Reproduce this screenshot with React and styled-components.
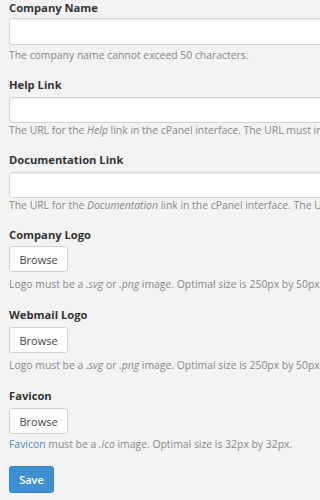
import React from 'react';
import styled, { createGlobalStyle } from 'styled-components';

const GlobalStyle = createGlobalStyle`
    html, body {
        margin: 0;
        padding: 0;
        background: #f3f3f3;
        overflow: hidden;
    }
    body {
        font-family: "Open Sans", "Liberation Sans", sans-serif;
        color: #333;
    }
`;

const Page = styled.div`
    width: 700px;
    padding: 0 9px;
`;

const FormGroup = styled.div`
    margin-bottom: ${props => props.file ? 15 : 14}px;
`;

const Label = styled.label`
    display: block;
    font-size: 11.2px;
    font-weight: 700;
    line-height: 15px;
    margin-bottom: ${props => props.gap || 5}px;
    color: #333;
`;

const TextInput = styled.input`
    display: block;
    box-sizing: border-box;
    width: 560px;
    height: ${props => props.tall ? 27 : 26}px;
    border: 1px solid #d4d4d4;
    border-radius: 3px;
    background: #fff;
    box-shadow: inset 0 1px 1px rgba(0, 0, 0, 0.06);
    margin: 0;
`;

const BrowseButton = styled.button`
    display: block;
    box-sizing: border-box;
    height: 26px;
    width: 59px;
    padding: 0;
    border: 1px solid #d0d0d0;
    border-radius: 3px;
    background: #fff;
    font-family: inherit;
    font-size: 11px;
    color: #444;
`;

const Help = styled.div`
    font-size: 10.4px;
    line-height: 15px;
    color: #888;
    white-space: nowrap;
    margin-top: ${props => props.gap || 0}px;
    em {
        font-style: italic;
    }
`;

const HelpLink = styled.span`
    color: #4a8dc8;
`;

const SaveButton = styled.button`
    display: block;
    box-sizing: border-box;
    height: 27px;
    width: 45px;
    padding: 0;
    border: 1px solid #3a85c8;
    border-radius: 3px;
    background: #3f8fd3;
    font-family: inherit;
    font-size: 11px;
    font-weight: 600;
    color: #fff;
    margin-top: 1px;
`;

export default function App() {
    return (
        <Page>
            <GlobalStyle />
            <FormGroup>
                <Label gap={3}>Company Name</Label>
                <TextInput tall />
                <Help gap={3}>The company name cannot exceed 50 characters.</Help>
            </FormGroup>
            <FormGroup>
                <Label>Help Link</Label>
                <TextInput />
                <Help>The URL for the <em>Help</em> link in the cPanel interface. The URL must include the protocol.</Help>
            </FormGroup>
            <FormGroup>
                <Label>Documentation Link</Label>
                <TextInput />
                <Help>The URL for the <em>Documentation</em> link in the cPanel interface. The URL must include the protocol.</Help>
            </FormGroup>
            <FormGroup file>
                <Label gap={4}>Company Logo</Label>
                <BrowseButton>Browse</BrowseButton>
                <Help gap={5}>Logo must be a <em>.svg</em> or <em>.png</em> image. Optimal size is 250px by 50px.</Help>
            </FormGroup>
            <FormGroup file>
                <Label gap={5}>Webmail Logo</Label>
                <BrowseButton>Browse</BrowseButton>
                <Help gap={5}>Logo must be a <em>.svg</em> or <em>.png</em> image. Optimal size is 250px by 50px.</Help>
            </FormGroup>
            <FormGroup>
                <Label gap={5}>Favicon</Label>
                <BrowseButton>Browse</BrowseButton>
                <Help gap={3}><HelpLink>Favicon</HelpLink> must be a <em>.ico</em> image. Optimal size is 32px by 32px.</Help>
            </FormGroup>
            <SaveButton>Save</SaveButton>
        </Page>
    );
}
